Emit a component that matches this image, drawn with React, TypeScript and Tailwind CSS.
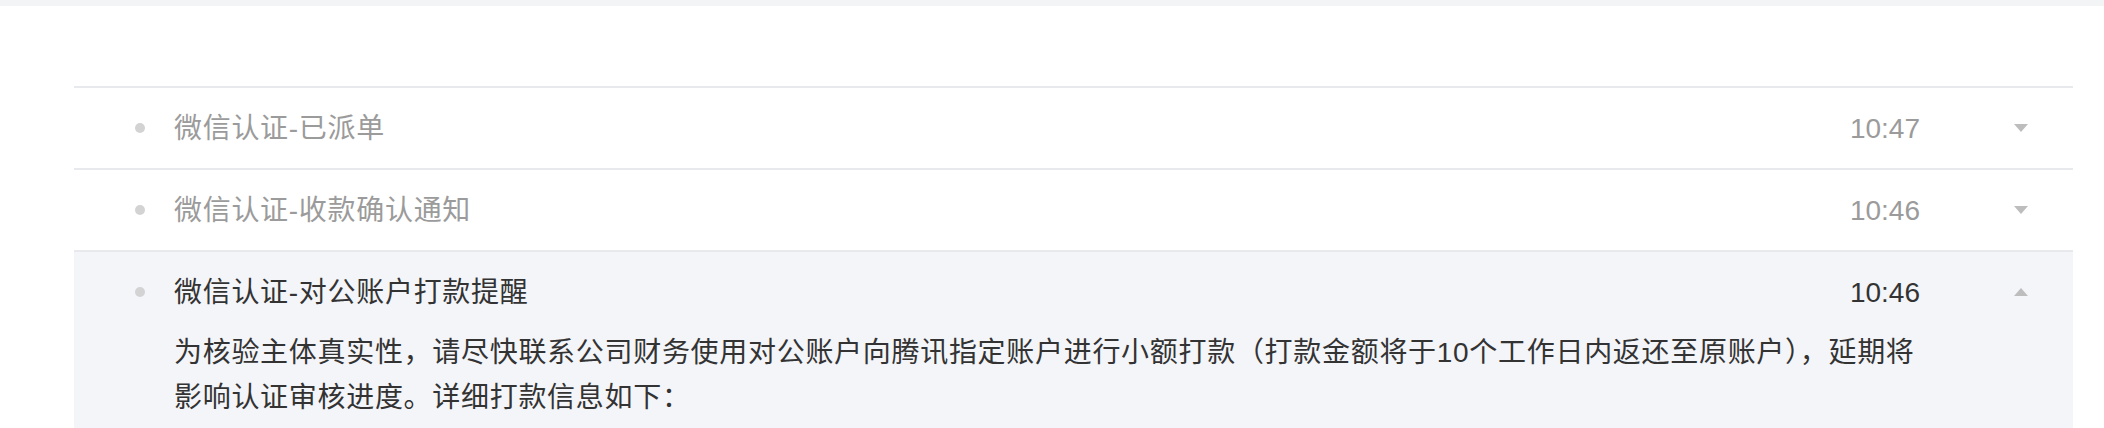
import React from "react";

const FONT = { fontFamily: '"Liberation Sans", "Noto Sans CJK SC", sans-serif' };

function Caret({ up }: { up?: boolean }) {
  return (
    <svg width="14" height="8" viewBox="0 0 14 8" className="block">
      {up ? <polygon points="0,8 14,8 7,0" fill="#bdbdbd" /> : <polygon points="0,0 14,0 7,8" fill="#bdbdbd" />}
    </svg>
  );
}

function Row({ title, time, expanded, children }: { title: string; time: string; expanded?: boolean; children?: React.ReactNode }) {
  return (
    <div className={`border-t-2 border-[#e8e9ed] ${expanded ? "bg-[#f4f5f9]" : "bg-white"}`}>
      <div className="flex h-[80px] items-center pl-[61px] pr-[45px]">
        <span className="block h-[10px] w-[10px] rounded-full bg-[#d3d3d3]" />
        <div className={`ml-[29px] flex-1 pt-[2px] text-[28px] tracking-[0.7px] ${expanded ? "text-[#333333]" : "text-[#9b9b9b]"}`}>{title}</div>
        <div className={`pt-[2px] text-[28px] ${expanded ? "text-[#333333]" : "text-[#9b9b9b]"}`}>{time}</div>
        <div className="ml-[94px]">
          <Caret up={expanded} />
        </div>
      </div>
      {children}
    </div>
  );
}

export default function App() {
  return (
    <div className="h-[428px] w-[2104px] overflow-hidden bg-white" style={FONT}>
      <div className="h-[6px] bg-[#f3f4f6]" />
      <div className="ml-[74px] mr-[31px] mt-[80px]">
        <Row title="微信认证-已派单" time="10:47" />
        <Row title="微信认证-收款确认通知" time="10:46" />
        <Row title="微信认证-对公账户打款提醒" time="10:46" expanded>
          <div className="-mt-[2px] w-[1762px] pl-[100px] text-[28px] leading-[45px] tracking-[0.7px] text-[#333333]" style={{ boxSizing: "content-box" }}>
            为核验主体真实性，请尽快联系公司财务使用对公账户向腾讯指定账户进行小额打款（打款金额将于10个工作日内返还至原账户），延期将影响认证审核进度。详细打款信息如下：
          </div>
          <div className="h-[40px]" />
        </Row>
      </div>
    </div>
  );
}
